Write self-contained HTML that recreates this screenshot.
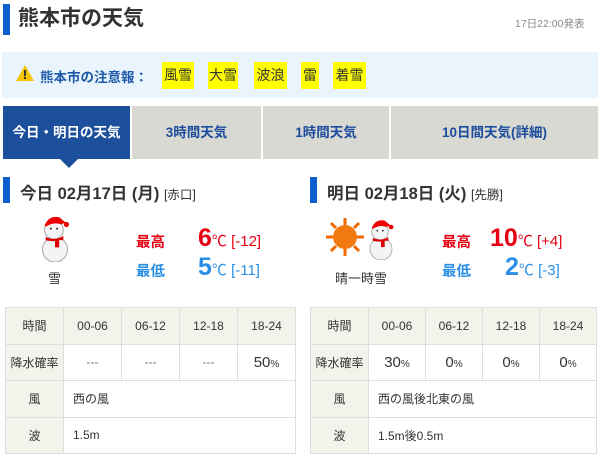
<!DOCTYPE html><html><head><meta charset="utf-8"><style>
*{margin:0;padding:0;box-sizing:border-box}
body{width:600px;height:456px;background:#fff;font-family:"Liberation Sans","Noto Sans CJK JP",sans-serif;position:relative;overflow:hidden;color:#333}
.a{position:absolute;white-space:nowrap}
.bar{position:absolute;background:#0f5fcf;width:7px}
.tag{position:absolute;top:62px;height:27px;background:#ffff00;font-size:14px;line-height:27px;text-align:center;color:#333}
.tab{position:absolute;top:106px;height:53px;background:#d9d9d4;color:#1c4c9c;font-weight:bold;font-size:13.5px;line-height:53px;text-align:center}
table{position:absolute;border-collapse:collapse;font-size:12px;color:#333}
td{border:1px solid #ddd;height:36.5px;text-align:center}
td.h{background:#f3f3ec}
.l{text-align:left;padding-left:9px}
.p{font-size:15px}.p small{font-size:10px}
</style></head><body>
<div class="bar" style="left:3px;top:4px;height:31px"></div>
<div class="a" style="left:18px;top:4px;font-size:21px;font-weight:bold;line-height:30px">熊本市の天気</div>
<div class="a" style="left:515px;top:16px;font-size:10.5px;color:#888">17日22:00発表</div>
<div class="a" style="left:2px;top:52px;width:596px;height:46px;background:#eaf4fd"></div>
<svg class="a" style="left:15px;top:64px" width="20" height="18" viewBox="0 0 20 18"><path d="M10 1L19 17H1Z" fill="#f5c400"/><rect x="9" y="6" width="2" height="6" fill="#333"/><rect x="9" y="13" width="2" height="2" fill="#333"/></svg>
<div class="a" style="left:40px;top:66px;font-size:13.5px;font-weight:bold;color:#1c5aa8">熊本市の注意報：</div>
<div class="tag" style="left:162px;width:32px">風雪</div>
<div class="tag" style="left:208px;width:30px">大雪</div>
<div class="tag" style="left:254px;width:33px">波浪</div>
<div class="tag" style="left:301px;width:18px">雷</div>
<div class="tag" style="left:333px;width:33px">着雪</div>
<div class="tab" style="left:3px;width:127px;background:#1c4f9c;color:#fff">今日・明日の天気</div>
<div class="tab" style="left:132px;width:129px">3時間天気</div>
<div class="tab" style="left:263px;width:126px">1時間天気</div>
<div class="tab" style="left:391px;width:207px">10日間天気(詳細)</div>
<div class="a" style="left:60px;top:159px;width:0;height:0;border-left:9px solid transparent;border-right:9px solid transparent;border-top:9px solid #1c4f9c"></div>

<div class="bar" style="left:3px;top:177px;height:26px"></div>
<div class="a" style="left:20px;top:180px;font-size:16.5px;font-weight:bold">今日 02月17日 (月) <span style="font-size:12.5px;font-weight:normal">[赤口]</span></div>
<div class="bar" style="left:310px;top:177px;height:26px"></div>
<div class="a" style="left:327px;top:180px;font-size:16.5px;font-weight:bold">明日 02月18日 (火) <span style="font-size:12.5px;font-weight:normal">[先勝]</span></div>

<svg class="a" style="left:36px;top:212px" width="38" height="50" viewBox="0 0 36 48"><circle cx="18" cy="36" r="12" fill="#f4f4f4" stroke="#aaa"/><circle cx="17" cy="17" r="9" fill="#f6f6f6" stroke="#aaa"/><path d="M8 13Q12 3 22 5L28 10 24 12Q17 9 9 14Z" fill="#e00"/><circle cx="29" cy="12" r="2.5" fill="#e00"/><path d="M9 24Q18 28 26 23L26 27 22 27 22 34 18 34 18 28Q12 28 9 27Z" fill="#d00"/><circle cx="14" cy="16" r="1" fill="#333"/><circle cx="20" cy="16" r="1" fill="#333"/></svg>
<div class="a" style="left:48px;top:268px;font-size:13px">雪</div>
<div class="a" style="left:136px;top:231px;font-size:14.5px;font-weight:bold;color:#e60012">最高</div>
<div class="a" style="left:198px;top:224px;font-size:25px;font-weight:bold;color:#e60012">6<span style="font-size:15px;font-weight:normal">℃ [-12]</span></div>
<div class="a" style="left:136px;top:260px;font-size:14.5px;font-weight:bold;color:#2a8ee6">最低</div>
<div class="a" style="left:198px;top:253px;font-size:25px;font-weight:bold;color:#2a8ee6">5<span style="font-size:15px;font-weight:normal">℃ [-11]</span></div>

<svg class="a" style="left:325px;top:217px" width="40" height="40" viewBox="0 0 40 40"><g stroke="#f06a00" stroke-width="3"><path d="M20 1V8M20 32V39M1 20H8M32 20H39M6 6L11 11M29 29L34 34M6 34L11 29M29 11L34 6"/></g><circle cx="20" cy="20" r="12" fill="#f27a10"/></svg>
<svg class="a" style="left:364px;top:216px" width="34" height="44" viewBox="0 0 36 48"><circle cx="18" cy="36" r="12" fill="#f4f4f4" stroke="#aaa"/><circle cx="17" cy="17" r="9" fill="#f6f6f6" stroke="#aaa"/><path d="M8 13Q12 3 22 5L28 10 24 12Q17 9 9 14Z" fill="#e00"/><circle cx="29" cy="12" r="2.5" fill="#e00"/><path d="M9 24Q18 28 26 23L26 27 22 27 22 34 18 34 18 28Q12 28 9 27Z" fill="#d00"/><circle cx="14" cy="16" r="1" fill="#333"/><circle cx="20" cy="16" r="1" fill="#333"/></svg>
<div class="a" style="left:335px;top:268px;font-size:13px">晴一時雪</div>
<div class="a" style="left:442px;top:231px;font-size:14.5px;font-weight:bold;color:#e60012">最高</div>
<div class="a" style="left:490px;top:224px;font-size:25px;font-weight:bold;color:#e60012">10<span style="font-size:15px;font-weight:normal">℃ [+4]</span></div>
<div class="a" style="left:442px;top:260px;font-size:14.5px;font-weight:bold;color:#2a8ee6">最低</div>
<div class="a" style="left:505px;top:253px;font-size:25px;font-weight:bold;color:#2a8ee6">2<span style="font-size:15px;font-weight:normal">℃ [-3]</span></div>

<table style="left:5px;top:307px;width:291px">
<tr><td class="h" style="width:58px">時間</td><td class="h">00-06</td><td class="h">06-12</td><td class="h">12-18</td><td class="h">18-24</td></tr>
<tr><td class="h">降水確率</td><td style="color:#777">---</td><td style="color:#777">---</td><td style="color:#777">---</td><td class="p">50<small>%</small></td></tr>
<tr><td class="h">風</td><td colspan="4" class="l">西の風</td></tr>
<tr><td class="h">波</td><td colspan="4" class="l">1.5m</td></tr>
</table>
<table style="left:310px;top:307px;width:287px">
<tr><td class="h" style="width:58px">時間</td><td class="h">00-06</td><td class="h">06-12</td><td class="h">12-18</td><td class="h">18-24</td></tr>
<tr><td class="h">降水確率</td><td class="p">30<small>%</small></td><td class="p">0<small>%</small></td><td class="p">0<small>%</small></td><td class="p">0<small>%</small></td></tr>
<tr><td class="h">風</td><td colspan="4" class="l">西の風後北東の風</td></tr>
<tr><td class="h">波</td><td colspan="4" class="l">1.5m後0.5m</td></tr>
</table>
</body></html>
